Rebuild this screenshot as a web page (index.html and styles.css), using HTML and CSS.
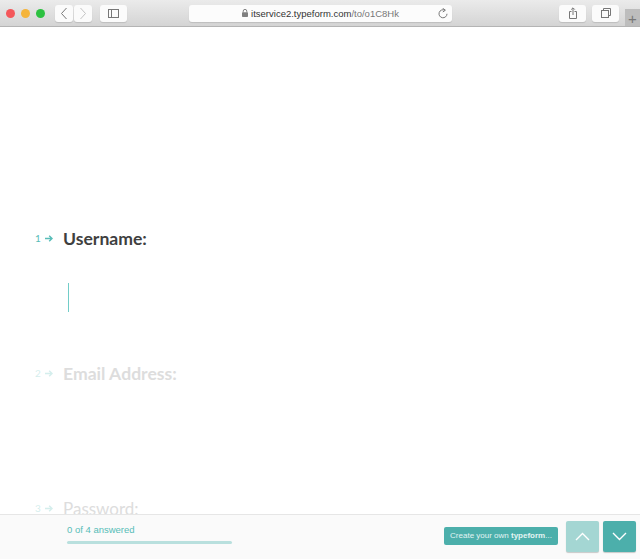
FILE: index.html
```html
<!DOCTYPE html>
<html lang="en">
<head>
    <meta charset="UTF-8">
    <meta name="viewport" content="width=device-width, initial-scale=1.0">
    <title>Typeform</title>
    <link rel="stylesheet" href="styles.css">
</head>
<body>

    <div class="toolbar">
        <div class="lights">
            <span class="light red"></span>
            <span class="light yellow"></span>
            <span class="light green"></span>
        </div>
        <div class="nav-buttons">
            <div class="tool-button nav-button">
                <svg width="8" height="13" viewBox="0 0 8 13"><path d="M6.5 1 L1.5 6.5 L6.5 12" class="icon-line"></path></svg>
            </div>
            <div class="tool-button nav-button">
                <svg width="8" height="13" viewBox="0 0 8 13"><path d="M1.5 1 L6.5 6.5 L1.5 12" class="icon-line faded"></path></svg>
            </div>
        </div>
        <div class="tool-button sidebar-button">
            <svg width="11" height="9" viewBox="0 0 11 9"><rect x="0.5" y="0.5" width="10" height="8" class="icon-line"></rect><line x1="3.5" y1="0.5" x2="3.5" y2="8.5" class="icon-line"></line></svg>
        </div>
        <div class="address-bar">
            <div class="address-text">
                <svg width="6" height="8" viewBox="0 0 6 8"><path d="M1.2 3.5 V2.2 A1.8 1.8 0 0 1 4.8 2.2 V3.5" class="lock-loop"></path><rect x="0" y="3.3" width="6" height="4.7" rx="0.8" fill="#808080"></rect></svg>
                <span><span class="domain">itservice2.typeform.com</span>/to/o1C8Hk</span>
            </div>
            <svg class="reload" width="10" height="11" viewBox="0 0 10 11"><path d="M6.8 2.2 A4 4 0 1 0 9 5.8" class="icon-line"></path><path d="M4.6 0.2 L7.4 2.2 L4.8 4" class="icon-line"></path></svg>
        </div>
        <div class="tool-button right-button share-button">
            <svg width="8" height="12" viewBox="0 0 8 12"><path d="M2.5 4.5 H0.5 V11.5 H7.5 V4.5 H5.5 M4 8 V1 M2.2 2.6 L4 0.8 L5.8 2.6" class="icon-line"></path></svg>
        </div>
        <div class="tool-button right-button">
            <svg width="10" height="10" viewBox="0 0 10 10"><rect x="0.5" y="2.5" width="7" height="7" class="icon-line"></rect><path d="M2.5 2.5 V0.5 H9.5 V7.5 H7.5" class="icon-line"></path></svg>
        </div>
        <div class="new-tab">+</div>
    </div>

    <div class="form-page">
        <div class="question">
            <div class="question-head active">
                <span class="question-number">1</span>
                <svg class="question-arrow" width="8" height="7" viewBox="0 0 8 7"><path d="M0 3.5 H7 M4.2 0.8 L7 3.5 L4.2 6.2"></path></svg>
                <span class="question-title">Username:</span>
            </div>
            <div class="answer-line"><div class="caret"></div></div>
        </div>

        <div class="question faded-one">
            <div class="question-head">
                <span class="question-number">2</span>
                <svg class="question-arrow" width="8" height="7" viewBox="0 0 8 7"><path d="M0 3.5 H7 M4.2 0.8 L7 3.5 L4.2 6.2"></path></svg>
                <span class="question-title">Email Address:</span>
            </div>
        </div>

        <div class="question faded-two">
            <div class="question-head">
                <span class="question-number">3</span>
                <svg class="question-arrow" width="8" height="7" viewBox="0 0 8 7"><path d="M0 3.5 H7 M4.2 0.8 L7 3.5 L4.2 6.2"></path></svg>
                <span class="question-title thin">Password:</span>
            </div>
        </div>

        <div class="footer">
            <div class="progress">
                <div class="progress-text">0 of 4 answered</div>
                <div class="progress-bar"></div>
            </div>
            <div class="create-button">Create your own <b>typeform</b>...</div>
            <div class="arrow-button up">
                <svg width="15" height="9" viewBox="0 0 15 9"><path d="M1 8 L7.5 1.5 L14 8" class="arrow-line"></path></svg>
            </div>
            <div class="arrow-button down">
                <svg width="15" height="9" viewBox="0 0 15 9"><path d="M1 1 L7.5 7.5 L14 1" class="arrow-line"></path></svg>
            </div>
        </div>
    </div>

</body>
</html>
```

FILE: styles.css
```css
html, body {
    height: 100%;
}

body {
    margin: 0;
    display: flex;
    flex-direction: column;
    overflow: hidden;
    background-color: #ffffff;
    font-family: "Lato", sans-serif;
}

.toolbar {
    height: 27px;
    flex-shrink: 0;
    display: flex;
    align-items: center;
    padding-left: 6px;
    box-sizing: border-box;
    background: linear-gradient(#ebebeb, #d4d4d4);
    border-bottom: 1px solid #b4b4b4;
}

.lights {
    display: flex;
    gap: 6px;
    margin-right: 10px;
}

.light {
    width: 9px;
    height: 9px;
    border-radius: 50%;
}

.red { background-color: #f4575a; }
.yellow { background-color: #f5b43a; }
.green { background-color: #2cc140; }

.tool-button {
    height: 17px;
    flex-shrink: 0;
    display: flex;
    align-items: center;
    justify-content: center;
    background-color: #fbfbfb;
    border-radius: 3px;
    box-shadow: 0 1px 1px rgba(0, 0, 0, 0.12);
}

.nav-buttons {
    display: flex;
    gap: 1px;
    margin-right: 8px;
}

.nav-button {
    width: 18px;
}

.sidebar-button {
    width: 27px;
    margin-right: 62px;
}

.address-bar {
    width: 263px;
    height: 17px;
    flex-shrink: 0;
    position: relative;
    display: flex;
    align-items: center;
    justify-content: center;
    background-color: #fcfcfc;
    border-radius: 3px;
    box-shadow: 0 1px 1px rgba(0, 0, 0, 0.12);
    margin-right: 107px;
    font-family: "Liberation Sans", sans-serif;
    font-size: 9.5px;
    color: #777777;
}

.address-text {
    display: flex;
    align-items: center;
    gap: 3px;
}

.domain {
    color: #333333;
}

.reload {
    position: absolute;
    right: 4px;
    top: 3px;
}

.right-button {
    width: 27px;
    margin-right: 6px;
}

.new-tab {
    width: 15px;
    height: 17px;
    flex-shrink: 0;
    margin-top: 9px;
    box-sizing: border-box;
    padding-top: 2px;
    background-color: #bdbdbd;
    color: #777777;
    font-size: 15px;
    line-height: 15px;
    text-align: center;
    font-family: "Liberation Sans", sans-serif;
}

.icon-line {
    fill: none;
    stroke: #777777;
    stroke-width: 1;
}

.icon-line.faded {
    stroke: #c4c4c4;
}

.lock-loop {
    fill: none;
    stroke: #808080;
    stroke-width: 1;
}

.form-page {
    flex: 1;
    position: relative;
    padding-top: 198px;
    padding-left: 35px;
    overflow: hidden;
}

.question {
    height: 135px;
}

.question-head {
    display: flex;
    align-items: center;
    height: 26px;
    color: #dddddd;
}

.question-number {
    width: 10px;
    font-size: 10px;
    color: #58bdb8;
}

.question-arrow {
    margin-right: 10px;
    fill: none;
    stroke: #58bdb8;
    stroke-width: 1.4;
}

.question-title {
    font-size: 17.6px;
    font-weight: bold;
}

.question-title.thin {
    font-size: 17px;
    font-weight: normal;
}

.active {
    color: #3f3f3f;
}

.faded-one .question-number,
.faded-one .question-arrow,
.faded-two .question-number,
.faded-two .question-arrow {
    opacity: 0.25;
}

.answer-line {
    padding-top: 32px;
    padding-left: 33px;
}

.caret {
    width: 1px;
    height: 29px;
    background-color: #72cdc8;
}

.footer {
    position: absolute;
    left: 0;
    right: 0;
    bottom: 0;
    height: 45px;
    box-sizing: border-box;
    display: flex;
    align-items: center;
    padding-left: 67px;
    padding-right: 4px;
    padding-bottom: 2px;
    background-color: #fafafa;
    border-top: 1px solid #e6e6e6;
}

.progress {
    width: 165px;
    flex-shrink: 0;
    margin-right: 212px;
    margin-bottom: 4px;
}

.progress-text {
    font-size: 9.5px;
    color: #58bdb8;
    font-family: "Liberation Sans", sans-serif;
    margin-bottom: 6px;
}

.progress-bar {
    height: 3px;
    border-radius: 2px;
    background-color: #b9e0de;
}

.create-button {
    width: 114px;
    height: 18px;
    flex-shrink: 0;
    box-sizing: border-box;
    line-height: 18px;
    text-align: center;
    margin-right: 8px;
    border-radius: 2px;
    background-color: #4cafab;
    color: #e3f4f3;
    font-size: 8px;
    font-family: "Liberation Sans", sans-serif;
}

.arrow-button {
    width: 33px;
    height: 31px;
    flex-shrink: 0;
    display: flex;
    align-items: center;
    justify-content: center;
    border-radius: 2px;
    background-color: #4cafab;
    box-shadow: 0 1px 1px rgba(0, 0, 0, 0.2);
}

.arrow-button.up {
    background-color: #a4d6d3;
    margin-right: 4px;
}

.arrow-line {
    fill: none;
    stroke: #ffffff;
    stroke-width: 1.4;
}
```
